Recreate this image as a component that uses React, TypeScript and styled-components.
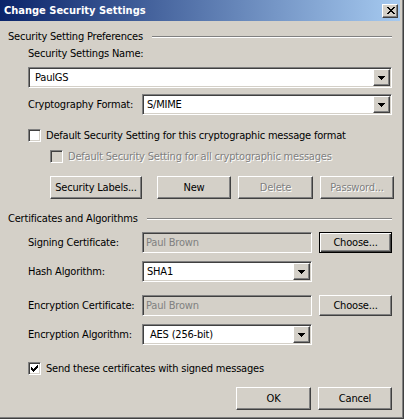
import React from 'react';
import styled, { createGlobalStyle, css } from 'styled-components';

const GlobalStyle = createGlobalStyle`
  html, body {
    margin: 0;
    padding: 0;
    background: #d4d0c8;
  }
  body {
    font-family: Tahoma, "DejaVu Sans Condensed", "Liberation Sans", sans-serif;
    font-size: 11px;
    line-height: 13px;
    letter-spacing: -0.2px;
    color: #000;
  }
  * {
    box-sizing: border-box;
  }
`;

// classic 3D edges
const raised = css`
  border: 1px solid;
  border-color: #fff #404040 #404040 #fff;
  box-shadow: inset -1px -1px #808080, inset 1px 1px #d4d0c8;
  background: #d4d0c8;
`;

const sunken = css`
  border: 1px solid;
  border-color: #808080 #fff #fff #808080;
  box-shadow: inset 1px 1px #404040, inset -1px -1px #d4d0c8;
`;

const Window = styled.div`
  width: 404px;
  height: 419px;
  display: flex;
  flex-direction: column;
  background: #d4d0c8;
  border-right: 1px solid #404040;
  border-bottom: 1px solid #404040;
  box-shadow: inset -1px -1px #808080;
  padding: 0 3px 3px 0;
`;

const TitleBar = styled.div`
  height: 21px;
  flex: none;
  display: flex;
  align-items: center;
  justify-content: space-between;
  padding: 0 2px 0 4px;
  background: linear-gradient(to right, #0a246a, #a6caf0);
`;

const TitleText = styled.span`
  color: #fff;
  font-weight: bold;
  font-size: 11px;
  letter-spacing: 0;
  white-space: nowrap;
`;

const CloseButton = styled.div`
  ${raised};
  width: 16px;
  height: 14px;
  display: flex;
  align-items: center;
  justify-content: center;
  padding-left: 1px;
`;

const Body = styled.div`
  display: flex;
  flex-direction: column;
  padding: 0 8px;
`;

const GroupHeader = styled.div<{ $mt: number }>`
  display: flex;
  align-items: center;
  height: 13px;
  margin-top: ${(p) => p.$mt}px;
  white-space: nowrap;
`;

const Rule = styled.div`
  flex: 1;
  height: 2px;
  margin-left: 9px;
  border-top: 1px solid #808080;
  border-bottom: 1px solid #fff;
`;

const Section = styled.div`
  display: flex;
  flex-direction: column;
  padding-left: 20px;
`;

const Label = styled.div<{ $mt?: number; $w?: number }>`
  flex: none;
  white-space: nowrap;
  margin-top: ${(p) => p.$mt ?? 0}px;
  width: ${(p) => (p.$w ? `${p.$w}px` : 'auto')};
`;

const Row = styled.div<{ $mt: number; $indent?: number }>`
  display: flex;
  align-items: center;
  margin-top: ${(p) => p.$mt}px;
  padding-left: ${(p) => p.$indent ?? 0}px;
`;

const ComboBox = styled.div<{ $w?: number; $mt?: number }>`
  ${sunken};
  background: #fff;
  height: 21px;
  padding: 1px;
  display: flex;
  align-items: center;
  margin-top: ${(p) => p.$mt ?? 0}px;
  ${(p) => (p.$w ? `width: ${p.$w}px; flex: none;` : 'flex: 1;')}
`;

const ComboValue = styled.span<{ $indent: number }>`
  flex: 1;
  padding-left: ${(p) => p.$indent}px;
  white-space: nowrap;
`;

const ArrowButton = styled.div`
  ${raised};
  width: 17px;
  height: 17px;
  flex: none;
  display: flex;
  align-items: center;
  justify-content: center;
`;

const TextBox = styled.div<{ $w: number }>`
  ${sunken};
  background: #d4d0c8;
  color: #808080;
  width: ${(p) => p.$w}px;
  height: 21px;
  flex: none;
  display: flex;
  align-items: center;
  padding-left: 3px;
  white-space: nowrap;
`;

const Button = styled.div<{ $w: number; $h?: number; $ml?: number; $disabled?: boolean; $default?: boolean }>`
  ${raised};
  width: ${(p) => p.$w}px;
  height: ${(p) => p.$h ?? 23}px;
  margin-left: ${(p) => p.$ml ?? 0}px;
  flex: none;
  display: flex;
  align-items: center;
  justify-content: center;
  white-space: nowrap;
  ${(p) =>
    p.$disabled &&
    css`
      color: #808080;
      text-shadow: 1px 1px 0 #fff;
    `}
  ${(p) =>
    p.$default &&
    css`
      border-color: #000;
      box-shadow: inset 1px 1px #fff, inset -1px -1px #404040, inset -2px -2px #808080;
    `}
`;

const CheckRow = styled.div<{ $mt: number; $indent?: number; $disabled?: boolean }>`
  display: flex;
  align-items: center;
  height: 13px;
  margin-top: ${(p) => p.$mt}px;
  padding-left: ${(p) => p.$indent ?? 0}px;
  white-space: nowrap;
  ${(p) =>
    p.$disabled &&
    css`
      color: #808080;
      text-shadow: 1px 1px 0 #fff;
    `}
`;

const Box = styled.div<{ $disabled?: boolean }>`
  ${sunken};
  width: 13px;
  height: 13px;
  flex: none;
  margin-right: 5px;
  background: ${(p) => (p.$disabled ? '#d4d0c8' : '#fff')};
  display: flex;
  align-items: center;
  justify-content: center;
`;

const Footer = styled.div`
  display: flex;
  justify-content: flex-end;
  gap: 7px;
  margin-top: 12px;
`;

const Arrow = () => (
  <svg width="7" height="4" viewBox="0 0 7 4" shapeRendering="crispEdges">
    <path d="M0 0h7v1H0z M1 1h5v1H1z M2 2h3v1H2z M3 3h1v1H3z" fill="#000" />
  </svg>
);

const Check = () => (
  <svg width="7" height="7" viewBox="0 0 7 7" shapeRendering="crispEdges">
    <path
      d="M6 0h1v1h-1z M5 1h2v1h-2z M0 2h1v1h-1z M4 2h3v1h-3z M0 3h2v1h-2z M3 3h3v1h-3z M0 4h5v1h-5z M1 5h3v1h-3z M2 6h1v1h-1z"
      fill="#000"
    />
  </svg>
);

const CloseGlyph = () => (
  <svg width="8" height="7" viewBox="0 0 8 7" shapeRendering="crispEdges">
    <path
      d="M0 0h2v1H0z M6 0h2v1H6z M1 1h2v1H1z M5 1h2v1H5z M2 2h4v1H2z M3 3h2v1H3z M2 4h4v1H2z M1 5h2v1H1z M5 5h2v1H5z M0 6h2v1H0z M6 6h2v1H6z"
      fill="#000"
    />
  </svg>
);

const Combo: React.FC<{ value: string; w?: number; mt?: number; indent?: number }> = ({ value, w, mt, indent = 3 }) => (
  <ComboBox $w={w} $mt={mt}>
    <ComboValue $indent={indent}>{value}</ComboValue>
    <ArrowButton>
      <Arrow />
    </ArrowButton>
  </ComboBox>
);

const App: React.FC = () => {
  return (
    <>
      <GlobalStyle />
      <Window>
        <TitleBar>
          <TitleText>Change Security Settings</TitleText>
          <CloseButton>
            <CloseGlyph />
          </CloseButton>
        </TitleBar>
        <Body>
          <GroupHeader $mt={9}>
            Security Setting Preferences
            <Rule />
          </GroupHeader>
          <Section>
            <Label $mt={4}>Security Settings Name:</Label>
            <Combo value="PaulGS" mt={7} indent={5} />
            <Row $mt={6}>
              <Label $w={114}>Cryptography Format:</Label>
              <Combo value="S/MIME" />
            </Row>
            <CheckRow $mt={14}>
              <Box />
              Default Security Setting for this cryptographic message format
            </CheckRow>
            <CheckRow $mt={8} $indent={22} $disabled>
              <Box $disabled />
              Default Security Setting for all cryptographic messages
            </CheckRow>
            <Row $mt={13} $indent={22}>
              <Button $w={92}>Security Labels...</Button>
              <Button $w={74} $ml={15}>New</Button>
              <Button $w={75} $ml={7} $disabled>Delete</Button>
              <Button $w={74} $ml={7} $disabled>Password...</Button>
            </Row>
          </Section>
          <GroupHeader $mt={13}>
            Certificates and Algorithms
            <Rule />
          </GroupHeader>
          <Section>
            <Row $mt={7}>
              <Label $w={114}>Signing Certificate:</Label>
              <TextBox $w={170}>Paul Brown</TextBox>
              <Button $w={73} $h={21} $ml={7} $default>Choose...</Button>
            </Row>
            <Row $mt={8}>
              <Label $w={114}>Hash Algorithm:</Label>
              <Combo value="SHA1" w={170} />
            </Row>
            <Row $mt={13}>
              <Label $w={114}>Encryption Certificate:</Label>
              <TextBox $w={170}>Paul Brown</TextBox>
              <Button $w={73} $h={21} $ml={7}>Choose...</Button>
            </Row>
            <Row $mt={8}>
              <Label $w={114}>Encryption Algorithm:</Label>
              <Combo value="AES (256-bit)" w={170} indent={6} />
            </Row>
            <CheckRow $mt={17}>
              <Box>
                <Check />
              </Box>
              Send these certificates with signed messages
            </CheckRow>
          </Section>
          <Footer>
            <Button $w={75}>OK</Button>
            <Button $w={74}>Cancel</Button>
          </Footer>
        </Body>
      </Window>
    </>
  );
};

export default App;
